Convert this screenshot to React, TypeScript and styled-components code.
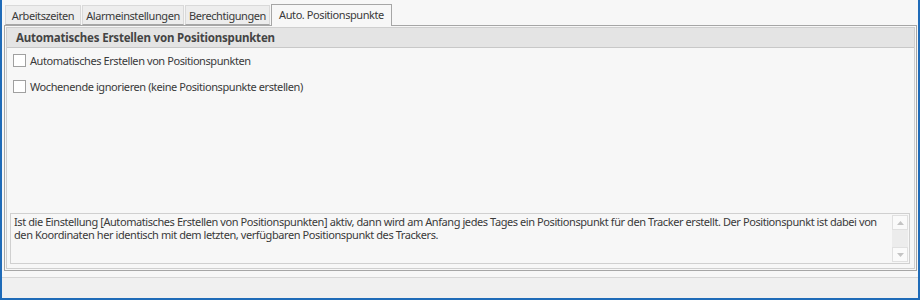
import styled, { createGlobalStyle } from "styled-components";

const GlobalStyle = createGlobalStyle`
  html, body {
    margin: 0;
    padding: 0;
    background: #f7f7f7;
  }
  * {
    box-sizing: border-box;
  }
`;

const tabs = [
  { label: "Arbeitszeiten", width: 76 },
  { label: "Alarmeinstellungen", width: 102 },
  { label: "Berechtigungen", width: 85 },
  { label: "Auto. Positionspunkte", width: 121 },
];
const activeTab = 3;

const options = [
  "Automatisches Erstellen von Positionspunkten",
  "Wochenende ignorieren (keine Positionspunkte erstellen)",
];

const hint =
  "Ist die Einstellung [Automatisches Erstellen von Positionspunkten] aktiv, dann wird am Anfang jedes Tages ein Positionspunkt für den Tracker erstellt. Der Positionspunkt ist dabei von den Koordinaten her identisch mit dem letzten, verfügbaren Positionspunkt des Trackers.";

const Arrow = ({ up }: { up?: boolean }) => (
  <svg width="7" height="4" viewBox="0 0 7 4">
    <path d={up ? "M0 4 L3.5 0 L7 4 Z" : "M0 0 L3.5 4 L7 0 Z"} fill="#c4c4c4" />
  </svg>
);

const App = () => {
  return (
    <>
      <GlobalStyle />
      <Window>
        <Content>
          <TabStrip>
            {tabs.map((t, i) => (
              <Tab key={t.label} $active={i === activeTab} $width={t.width}>
                {t.label}
              </Tab>
            ))}
          </TabStrip>
          <Panel>
            <GroupBox>
              <GroupHeader>Automatisches Erstellen von Positionspunkten</GroupHeader>
              <Options>
                {options.map((o) => (
                  <CheckRow key={o}>
                    <CheckBox />
                    <CheckLabel>{o}</CheckLabel>
                  </CheckRow>
                ))}
              </Options>
              <Memo>
                <MemoText>{hint}</MemoText>
                <ScrollBar>
                  <ScrollButton>
                    <Arrow up />
                  </ScrollButton>
                  <ScrollButton>
                    <Arrow />
                  </ScrollButton>
                </ScrollBar>
              </Memo>
            </GroupBox>
          </Panel>
        </Content>
        <StatusBar />
      </Window>
    </>
  );
};

const Window = styled.div`
  width: 920px;
  height: 300px;
  border: 2px solid #1f6bb8;
  border-top: none;
  background: #f7f7f7;
  display: flex;
  flex-direction: column;
  font-family: "Noto Sans", "Open Sans", sans-serif;
  font-size: 11px;
  letter-spacing: -0.42px;
  color: #3a3a3a;
`;

const Content = styled.div`
  padding: 4px 1px 0 2px;
  display: flex;
  flex-direction: column;
`;

const TabStrip = styled.div`
  display: flex;
  align-items: flex-end;
  height: 21px;
  padding-left: 1px;
  position: relative;
  z-index: 1;
`;

const Tab = styled.div<{ $active: boolean; $width: number }>`
  width: ${(p) => p.$width}px;
  height: ${(p) => (p.$active ? 22 : 20)}px;
  margin-right: 1px;
  margin-bottom: ${(p) => (p.$active ? -1 : 0)}px;
  display: flex;
  align-items: center;
  justify-content: center;
  padding-bottom: ${(p) => (p.$active ? 2 : 0)}px;
  background: ${(p) => (p.$active ? "#f7f7f7" : "#ededed")};
  border: 1px solid ${(p) => (p.$active ? "#a6a6a6" : "#d9d9d9")};
  border-bottom: ${(p) => (p.$active ? "none" : "1px solid #a6a6a6")};
  color: #3a3a3a;
  white-space: nowrap;
`;

const Panel = styled.div`
  height: 246px;
  border: 1px solid #a6a6a6;
  padding: 1px;
  display: flex;
`;

const GroupBox = styled.div`
  flex: 1;
  border: 1px solid #cfcfcf;
  display: flex;
  flex-direction: column;
`;

const GroupHeader = styled.div`
  height: 20px;
  background: #e4e4e4;
  border-bottom: 1px solid #c8c8c8;
  padding-left: 9px;
  display: flex;
  align-items: center;
  font-weight: bold;
  font-size: 11.5px;
  letter-spacing: -0.2px;
  color: #444;
`;

const Options = styled.div`
  display: flex;
  flex-direction: column;
  gap: 13px;
  padding: 6px 6px 0;
  flex: 1;
`;

const CheckRow = styled.div`
  display: flex;
  align-items: center;
  gap: 4px;
  height: 13px;
`;

const CheckBox = styled.span`
  width: 13px;
  height: 13px;
  background: #fff;
  border: 1px solid #a0a0a0;
  flex: none;
`;

const CheckLabel = styled.span`
  white-space: nowrap;
`;

const Memo = styled.div`
  height: 51px;
  margin: 0 4px 4px 3px;
  border: 1px solid #d0d0d0;
  display: flex;
`;

const MemoText = styled.div`
  flex: 1;
  padding: 1px 3px;
  line-height: 13px;
`;

const ScrollBar = styled.div`
  width: 16px;
  background: #ececec;
  margin: 1px;
  display: flex;
  flex-direction: column;
  justify-content: space-between;
`;

const ScrollButton = styled.div`
  height: 15px;
  background: #fafafa;
  border: 1px solid #e0e0e0;
  display: flex;
  align-items: center;
  justify-content: center;
`;

const StatusBar = styled.div`
  flex: 1;
  margin-top: 6px;
  border-top: 1px solid #d6d6d6;
  background: #f0f0f0;
`;

export default App;
